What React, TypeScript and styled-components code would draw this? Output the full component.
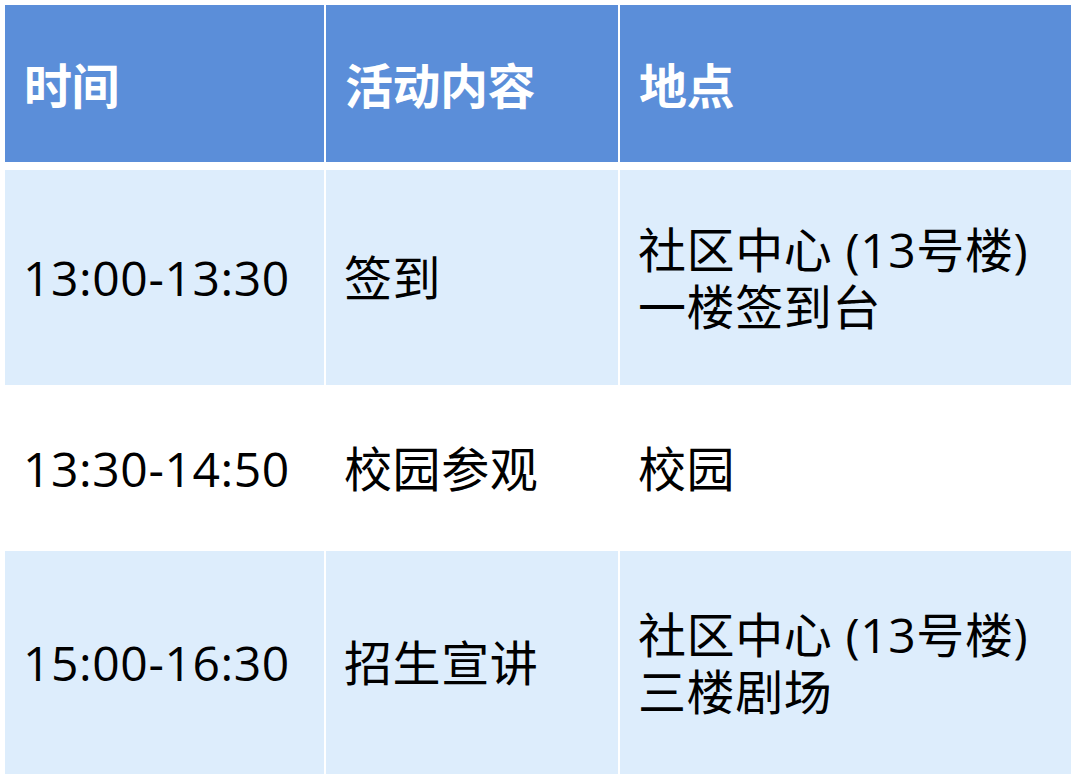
import React from 'react';
import styled, { createGlobalStyle } from 'styled-components';

const GlobalStyle = createGlobalStyle`
  html, body {
    margin: 0;
    padding: 0;
    background: #ffffff;
  }
  body {
    font-family: "Open Sans", "Noto Sans CJK SC", sans-serif;
  }
`;

const Page = styled.div`
  padding: 5px 9px 7px 5px;
`;

const Table = styled.div`
  display: grid;
  grid-template-columns: 319px 292px 451px;
  column-gap: 2px;
  row-gap: 2px;
`;

const HeadCell = styled.div`
  height: 157px;
  margin-bottom: 6px;
  background: #5b8ed9;
  color: #ffffff;
  display: flex;
  align-items: center;
  padding: 0 0 2px 19px;
  box-sizing: border-box;
  font-family: "Noto Sans CJK SC", sans-serif;
  font-weight: 700;
  font-size: 48px;
  letter-spacing: -0.5px;
`;

const Cell = styled.div<{ $shaded: boolean; $height: number }>`
  height: ${p => p.$height}px;
  background: ${p => (p.$shaded ? '#ddedfc' : '#ffffff')};
  color: #000000;
  display: flex;
  flex-direction: column;
  justify-content: center;
  padding-left: 18px;
  box-sizing: border-box;
  font-size: 48px;
  line-height: 57px;
  letter-spacing: 0.6px;
  white-space: nowrap;
`;

interface Row {
  time: string;
  activity: string;
  place: string[];
  height: number;
  shaded: boolean;
}

const rows: Row[] = [
  { time: '13:00-13:30', activity: '签到', place: ['社区中心 (13号楼)', '一楼签到台'], height: 215, shaded: true },
  { time: '13:30-14:50', activity: '校园参观', place: ['校园'], height: 162, shaded: false },
  { time: '15:00-16:30', activity: '招生宣讲', place: ['社区中心 (13号楼)', '三楼剧场'], height: 223, shaded: true },
];

export default function App() {
  return (
    <>
      <GlobalStyle />
      <Page>
        <Table>
          <HeadCell>时间</HeadCell>
          <HeadCell>活动内容</HeadCell>
          <HeadCell>地点</HeadCell>
          {rows.map(r => (
            <React.Fragment key={r.time}>
              <Cell $shaded={r.shaded} $height={r.height}>{r.time}</Cell>
              <Cell $shaded={r.shaded} $height={r.height}>{r.activity}</Cell>
              <Cell $shaded={r.shaded} $height={r.height}>
                {r.place.map(line => (
                  <div key={line}>{line}</div>
                ))}
              </Cell>
            </React.Fragment>
          ))}
        </Table>
      </Page>
    </>
  );
}
